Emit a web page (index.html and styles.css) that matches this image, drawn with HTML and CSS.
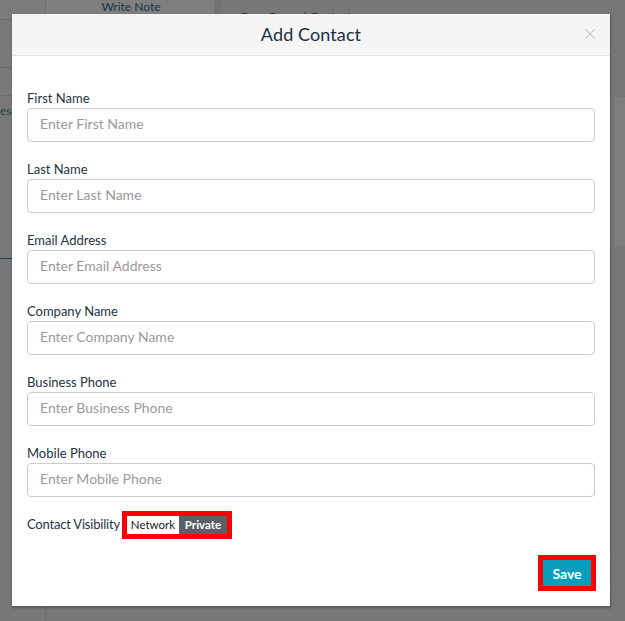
FILE: index.html
```html
<!DOCTYPE html>
<html>
<head>
<meta charset="utf-8">
<link rel="stylesheet" href="styles.css">
<title>Add Contact</title>
</head>
<body>
<div class="backdrop">
  <div class="bg-side">
    <div class="bg-side-cell c1"></div>
    <div class="bg-side-cell c2"></div>
    <div class="bg-side-cell c3"></div>
    <div class="bg-side-cell tall"><span class="bg-es">es</span></div>
    <div class="bg-side-cell teal"></div>
  </div>
  <div class="bg-top">
    <div class="bg-note">Write Note</div>
    <div class="bg-crumb">Peer Group | Contacts</div>
  </div>
  <div class="bg-right">
    <div class="bg-right-box"></div>
  </div>
</div>

<div class="modal">
  <div class="modal-header">
    <h4 class="modal-title">Add Contact</h4>
    <span class="close">&times;</span>
  </div>
  <div class="modal-body">
    <div class="field">
      <label class="field-label">First Name</label>
      <input class="field-input" type="text" placeholder="Enter First Name">
    </div>
    <div class="field">
      <label class="field-label">Last Name</label>
      <input class="field-input" type="text" placeholder="Enter Last Name">
    </div>
    <div class="field">
      <label class="field-label">Email Address</label>
      <input class="field-input" type="text" placeholder="Enter Email Address">
    </div>
    <div class="field">
      <label class="field-label">Company Name</label>
      <input class="field-input" type="text" placeholder="Enter Company Name">
    </div>
    <div class="field">
      <label class="field-label">Business Phone</label>
      <input class="field-input" type="text" placeholder="Enter Business Phone">
    </div>
    <div class="field">
      <label class="field-label">Mobile Phone</label>
      <input class="field-input" type="text" placeholder="Enter Mobile Phone">
    </div>
    <div class="visibility">
      <span class="visibility-label">Contact Visibility</span>
      <div class="toggle">
        <span class="toggle-opt toggle-network">Network</span>
        <span class="toggle-opt toggle-private">Private</span>
      </div>
    </div>
  </div>
  <div class="modal-footer">
    <button class="save-btn">Save</button>
  </div>
</div>
</body>
</html>
```

FILE: styles.css
```css
html, body {
  margin: 0;
  padding: 0;
}
body {
  width: 625px;
  height: 621px;
  background: #777777;
  font-family: Lato, "Liberation Sans", sans-serif;
  overflow: hidden;
  position: relative;
}

/* dimmed page behind the dialog */
.backdrop {
  display: grid;
  grid-template-columns: 46px 1fr 15px;
  height: 621px;
}
.bg-side {
  display: flex;
  flex-direction: column;
  border-right: 1px solid #6f6f6f;
}
.bg-side-cell {
  border-bottom: 1px solid #6c6c6c;
  background: #7b7b7b;
}
.bg-side-cell.c1 { height: 19px; }
.bg-side-cell.c2 { height: 47px; background: #787878; }
.bg-side-cell.c3 { height: 27px; background: #7a7a7a; }
.bg-side-cell.tall {
  height: 162px;
  position: relative;
  background: #787878;
  border-bottom: 1px solid #1f4a55;
}
.bg-side-cell.teal {
  border-bottom: none;
  flex: 1;
  background: #777;
}
.bg-es {
  position: absolute;
  left: 0;
  top: 8px;
  font-size: 12px;
  line-height: 14px;
  color: #23414c;
}
.bg-top {
  display: flex;
  align-items: flex-start;
  height: 40px;
}
.bg-note {
  width: 166px;
  background: #7e7e7e;
  border-right: 7px solid #727272;
  text-align: center;
  font-size: 12px;
  line-height: 13px;
  padding-bottom: 1px;
  color: #163846;
  padding-left: 2px;
}
.bg-crumb {
  margin-left: 20px;
  margin-top: 10px;
  font-size: 12px;
  line-height: 14px;
  color: #1e3742;
}
.bg-right {
  padding-top: 82px;
  background: #777;
}
.bg-right-box {
  margin-top: 14px;
  margin-left: 4px;
  height: 150px;
  background: #7d7d7d;
  border-radius: 3px 0 0 3px;
  border-top: 1px solid #747474;
}

/* dialog */
.modal {
  position: absolute;
  left: 12px;
  top: 14px;
  width: 599px;
  background: #ffffff;
  border-right: 1px solid #5d5d5d;
  border-bottom: 1px solid #5d5d5d;
  box-sizing: border-box;
  box-shadow: 0 1px 2px rgba(0,0,0,0.25);
}
.modal-header {
  height: 42px;
  padding-bottom: 2px;
  background: #f5f5f5;
  border-bottom: 1px solid #e4e4e4;
  box-sizing: border-box;
  display: flex;
  align-items: center;
  justify-content: center;
  position: relative;
}
.modal-title {
  margin: 0;
  font-size: 18px;
  font-weight: 400;
  color: #1c2f3d;
  letter-spacing: 0.1px;
}
.close {
  position: absolute;
  right: 12px;
  top: 10px;
  font-size: 19px;
  line-height: 19px;
  color: #c6c6c6;
  font-family: "DejaVu Sans", sans-serif;
  font-weight: 300;
}
.modal-body {
  padding: 34px 15px 0 15px;
}
.field {
  margin-bottom: 19px;
}
.field-label {
  display: block;
  font-size: 13px;
  line-height: 16px;
  color: #233443;
  margin-bottom: 2px;
}
.field-input {
  display: block;
  width: 100%;
  height: 34px;
  box-sizing: border-box;
  border: 1px solid #cccccc;
  border-radius: 4px;
  padding: 0 12px 3px 12px;
  font-family: Lato, "Liberation Sans", sans-serif;
  font-size: 14px;
  color: #333;
  background: #fff;
}
.field-input::placeholder {
  color: #9a9a9a;
}
.visibility {
  display: flex;
  align-items: center;
  margin-top: -5px;
}
.visibility-label {
  font-size: 13px;
  letter-spacing: -0.2px;
  color: #233443;
  margin-right: 2px;
  margin-top: -2px;
}
.toggle {
  display: flex;
  border: 5px solid #ff0000;
}
.toggle-opt {
  height: 18px;
  line-height: 18px;
  font-size: 11.5px;
  text-align: center;
}
.toggle-network {
  width: 52px;
  background: #ffffff;
  color: #1a1a1a;
}
.toggle-private {
  width: 48px;
  background: #5a6068;
  color: #ffffff;
  font-weight: 700;
}
.modal-footer {
  display: flex;
  justify-content: flex-end;
  padding: 16px 14px 15px 15px;
}
.save-btn {
  width: 58px;
  height: 36px;
  box-sizing: border-box;
  border: 5px solid #ff0000;
  background: #079ebd;
  color: #ffffff;
  font-family: Lato, "Liberation Sans", sans-serif;
  font-size: 14px;
  font-weight: 700;
  padding: 0;
  cursor: pointer;
}
```
